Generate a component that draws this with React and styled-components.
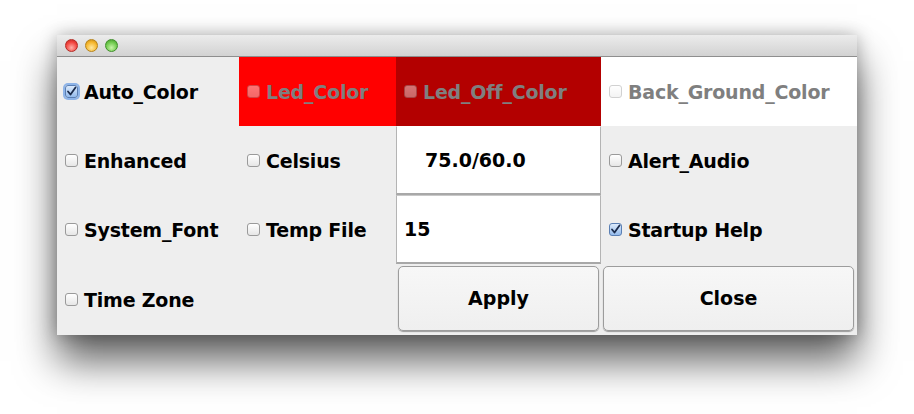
import React from "react";
import styled, { createGlobalStyle, css } from "styled-components";

const Global = createGlobalStyle`
  html, body { margin: 0; padding: 0; background: #ffffff; }
  body { font-family: "DejaVu Sans", "Liberation Sans", sans-serif; }
`;

const Page = styled.div`
  width: 914px;
  height: 414px;
  padding: 35px 0 0 57px;
  box-sizing: border-box;
  overflow: hidden;
`;

const Window = styled.div`
  width: 800px;
  background: #eeeeee;
  box-shadow: 0 26px 38px rgba(0, 0, 0, 0.62), 0 0 16px rgba(0, 0, 0, 0.28);
`;

const TitleBar = styled.div`
  height: 21px;
  display: flex;
  align-items: center;
  gap: 7px;
  padding-left: 8px;
  background: linear-gradient(#ececec, #d2d2d2);
  border-bottom: 1px solid #8e8e8e;
`;

const Light = styled.span`
  width: 13px;
  height: 13px;
  border-radius: 50%;
  box-sizing: border-box;
  border: 1px solid ${(p) => p.$edge};
  background: radial-gradient(circle at 50% 70%, ${(p) => p.$hi} 0%, ${(p) => p.$c} 60%, ${(p) => p.$edge} 100%);
`;

const Grid = styled.div`
  display: grid;
  grid-template-columns: 182px 157px 205px 256px;
  grid-template-rows: 69px 69px 69px 71px;
`;

const Cell = styled.div`
  display: flex;
  align-items: center;
  padding-left: 8px;
  background: ${(p) => p.$bg || "transparent"};
  box-sizing: border-box;
  min-width: 0;
`;

const Label = styled.span`
  font-family: "DejaVu Sans", sans-serif;
  font-weight: bold;
  font-size: 19px;
  letter-spacing: -0.2px;
  color: ${(p) => (p.$disabled ? "#7f7f7f" : "#000000")};
  margin-left: 6px;
  white-space: nowrap;
`;

const Box = styled.span`
  width: 13px;
  height: 13px;
  box-sizing: border-box;
  border-radius: 3px;
  display: inline-flex;
  align-items: center;
  justify-content: center;
  flex: none;
  ${(p) =>
    p.$checked
      ? css`
          border: 1px solid #5a7fb4;
          background: linear-gradient(#dceafb, #94bbec);
        `
      : css`
          border: 1px solid #9a9a9a;
          background: linear-gradient(#ffffff, #e6e6e6);
        `}
  ${(p) =>
    p.$focus &&
    css`
      box-shadow: 0 0 0 2px rgba(110, 160, 230, 0.75);
    `}
  ${(p) =>
    p.$disabled &&
    css`
      opacity: 0.45;
    `}
`;

const Field = styled.div`
  display: flex;
  align-items: center;
  box-sizing: border-box;
  background: #ffffff;
  border-left: 1px solid #b4b4b4;
  border-right: 1px solid #b4b4b4;
  border-bottom: 2px solid #a8a8a8;
  border-top: 1px solid ${(p) => p.$top || "#ffffff"};
  padding-left: ${(p) => p.$indent}px;
  font-family: "DejaVu Sans", sans-serif;
  font-weight: bold;
  font-size: 19px;
  color: #000;
`;

const ButtonCell = styled.div`
  display: flex;
  padding: 2px ${(p) => p.$right}px 4px 2px;
  box-sizing: border-box;
`;

const Button = styled.button`
  flex: 1;
  border: 1px solid #9c9c9c;
  border-radius: 5px;
  background: linear-gradient(#f7f7f7, #efefef);
  box-shadow: 0 1px 1px rgba(0, 0, 0, 0.35);
  font-family: "DejaVu Sans", sans-serif;
  font-weight: bold;
  font-size: 19px;
  color: #000;
  padding: 0 0 2px 0;
`;

const Check = () => (
  <svg width="11" height="11" viewBox="0 0 11 11">
    <path d="M2 5.5 L4.5 8.5 L9.5 1.5" fill="none" stroke="#1a2a4a" strokeWidth="1.8" strokeLinecap="round" strokeLinejoin="round" />
  </svg>
);

const CheckItem = ({ label, checked, focus, disabled, bg }) => (
  <Cell $bg={bg}>
    <Box $checked={checked} $focus={focus} $disabled={disabled}>
      {checked && <Check />}
    </Box>
    <Label $disabled={disabled}>{label}</Label>
  </Cell>
);

export default function App() {
  return (
    <>
      <Global />
      <Page>
        <Window>
          <TitleBar>
            <Light $c="#f2423c" $hi="#ffb0a8" $edge="#b52a24" />
            <Light $c="#f5b52a" $hi="#ffe9a0" $edge="#b88318" />
            <Light $c="#6cc84a" $hi="#c8f5a8" $edge="#3f8f2a" />
          </TitleBar>
          <Grid>
            <CheckItem label="Auto_Color" checked focus />
            <CheckItem label="Led_Color" disabled bg="#ff0000" />
            <CheckItem label="Led_Off_Color" disabled bg="#b30000" />
            <CheckItem label="Back_Ground_Color" disabled bg="#ffffff" />

            <CheckItem label="Enhanced" />
            <CheckItem label="Celsius" />
            <Field $indent={28}>75.0/60.0</Field>
            <CheckItem label="Alert_Audio" />

            <CheckItem label="System_Font" />
            <CheckItem label="Temp File" />
            <Field $indent={7} $top="#c8c8c8">15</Field>
            <CheckItem label="Startup Help" checked />

            <CheckItem label="Time Zone" />
            <Cell />
            <ButtonCell $right={2}>
              <Button>Apply</Button>
            </ButtonCell>
            <ButtonCell $right={3}>
              <Button>Close</Button>
            </ButtonCell>
          </Grid>
        </Window>
      </Page>
    </>
  );
}
